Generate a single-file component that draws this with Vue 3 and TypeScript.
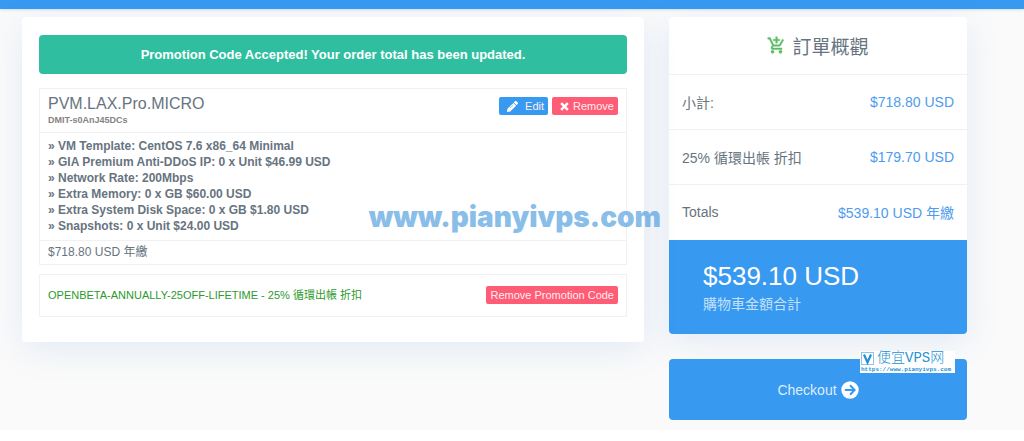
<script setup lang="ts">
interface SummaryRow {
  label: string
  amount: string
}

const options: string[] = [
  'VM Template: CentOS 7.6 x86_64 Minimal',
  'GIA Premium Anti-DDoS IP: 0 x Unit $46.99 USD',
  'Network Rate: 200Mbps',
  'Extra Memory: 0 x GB $60.00 USD',
  'Extra System Disk Space: 0 x GB $1.80 USD',
  'Snapshots: 0 x Unit $24.00 USD',
]

const summary: SummaryRow[] = [
  { label: '小計:', amount: '$718.80 USD' },
  { label: '25% 循環出帳 折扣', amount: '$179.70 USD' },
  { label: 'Totals', amount: '$539.10 USD 年繳' },
]
</script>

<template>
  <div class="page">
    <header class="topbar"></header>
    <main class="layout">
      <section class="card cart">
        <p class="alert" role="status">Promotion Code Accepted! Your order total has been updated.</p>

        <article class="item">
          <header class="item-head">
            <div>
              <h2 class="item-name">PVM.LAX.Pro.MICRO</h2>
              <p class="item-host">DMIT-s0AnJ45DCs</p>
            </div>
            <div class="actions">
              <button type="button" class="btn btn-blue">
                <svg class="icon-edit" viewBox="0 0 512 512" aria-hidden="true">
                  <path fill="currentColor" d="M498 142l-46 46c-5 5-12 5-17 0L324 77c-5-5-5-12 0-17l46-46c19-19 49-19 68 0l60 60c19 19 19 49 0 68zM284 100L22 362 0 484c-3 16 12 30 28 28l122-22 262-262c5-5 5-12 0-17L301 100c-5-5-12-5-17 0z" />
                  <path d="M135 330L290 175" fill="none" stroke="#3899f1" stroke-width="22" />
                </svg>
                Edit
              </button>
              <button type="button" class="btn btn-red">
                <svg class="icon-remove" viewBox="0 0 10 10" aria-hidden="true">
                  <path d="M1.300 1.300l7.400 7.400M8.700 1.300L1.300 8.700" fill="none" stroke="currentColor" stroke-width="2.800" />
                </svg>
                Remove
              </button>
            </div>
          </header>
          <ul class="options">
            <li v-for="option in options" :key="option">» {{ option }}</li>
          </ul>
          <p class="item-price">$718.80 USD 年繳</p>
        </article>

        <div class="promo">
          <p class="promo-name">OPENBETA-ANNUALLY-25OFF-LIFETIME - 25% 循環出帳 折扣</p>
          <button type="button" class="btn btn-red">Remove Promotion Code</button>
        </div>
        <span class="watermark">www.pianyivps.com</span>
      </section>

      <aside class="side">
        <section class="card overview">
          <h2 class="overview-title">
            <svg class="icon-cart" viewBox="0 0 24 24" aria-hidden="true">
              <path fill="currentColor" stroke="currentColor" stroke-width="0.500" d="M11 9h2V6h3V4h-3V1h-2v3H8v2h3v3zm-4 9c-1.100 0-1.990.9-1.990 2S5.900 22 7 22s2-.9 2-2-.9-2-2-2zm10 0c-1.100 0-1.990.9-1.990 2s.89 2 1.990 2 2-.9 2-2-.9-2-2-2zm-9.830-3.250l.03-.12.9-1.630h7.450c.75 0 1.410-.41 1.750-1.030l3.860-7.010L19.420 4h-.01l-1.100 2-2.760 5H8.530l-.13-.27L6.160 6l-.95-2-.94-2H1v2h2l3.600 7.590-1.350 2.450c-.16.28-.25.61-.25.96 0 1.100.9 2 2 2h12v-2H7.420c-.13 0-.25-.11-.25-.25z" />
            </svg>
            訂單概觀
          </h2>
          <dl class="rows">
            <div v-for="row in summary" :key="row.label" class="row">
              <dt>{{ row.label }}</dt>
              <dd>{{ row.amount }}</dd>
            </div>
          </dl>
          <div class="total">
            <strong class="total-amount">$539.10 USD</strong>
            <span class="total-label">購物車金額合計</span>
          </div>
        </section>

        <div class="checkout-wrap">
          <button type="button" class="checkout">
            Checkout
            <svg class="icon-arrow" viewBox="0 0 18 18" aria-hidden="true">
              <circle cx="9" cy="9" r="8.700" fill="#fff" />
              <path d="M3.800 9h9.600M9 4.300L13.600 9 9 13.700" fill="none" stroke="#3899f1" stroke-width="2" />
            </svg>
          </button>
          <div class="stamp">
            <div class="stamp-name">
              <svg class="icon-stamp" viewBox="0 0 13 13" aria-hidden="true">
                <rect x="0.500" y="0.500" width="12" height="12" fill="#fff" stroke="#8cc6ea" />
                <path d="M3 2.500L6.500 10.500 10 2.500" fill="none" stroke="#2492d4" stroke-width="2.200" />
              </svg>
              <span>便宜VPS网</span>
            </div>
            <span class="stamp-url">https://www.pianyivps.com</span>
          </div>
        </div>
      </aside>
    </main>
  </div>
</template>

<style>
body {
  margin: 0;
  background: #fff;
}
</style>

<style scoped>
.page {
  background: #fafafa;
  color: #677480;
  font-family: "Liberation Sans", Arial, "Noto Sans CJK TC", sans-serif;
  font-size: 14px;
}

h2,
p,
ul,
dl,
dd {
  margin: 0;
  padding: 0;
  font-weight: 400;
}

button {
  border: 0;
  font-family: inherit;
  color: #fff;
  cursor: pointer;
}

.topbar {
  height: 9px;
  background: #3899f1;
  box-shadow: 0 1px 3px rgba(56, 120, 200, 0.2);
}

.layout {
  display: grid;
  grid-template-columns: 622fr 298fr;
  align-items: start;
  gap: 25px;
  padding: 8px 57px 10px 22px;
}

.card {
  background: #fff;
  border-radius: 4px;
  box-shadow: 0 8px 34px rgba(60, 120, 210, 0.12);
}

.cart {
  position: relative;
  padding: 18px 17px 25px;
}

.alert {
  padding: 10px;
  border-radius: 4px;
  background: #2fbfa0;
  color: #fff;
  font-size: 13px;
  font-weight: 700;
  line-height: 19px;
  text-align: center;
}

.item {
  margin-top: 14px;
  border: 1px solid #eff1f4;
}

.item-head {
  display: flex;
  justify-content: space-between;
  align-items: flex-start;
  padding: 5px 8px;
}

.item-name {
  font-size: 16px;
  line-height: 20px;
}

.item-host {
  color: #85837f;
  font-size: 9px;
  font-weight: 700;
  line-height: 13px;
}

.actions {
  display: flex;
  gap: 4px;
  padding-top: 3px;
}

.btn {
  display: flex;
  align-items: center;
  justify-content: center;
  height: 18px;
  padding: 0 4px;
  border-radius: 2px;
  color: #ffeef1;
  font-size: 11px;
  line-height: 18px;
}

.btn-blue {
  background: #3899f1;
}

.btn-red {
  background: #ff5c75;
}

.btn svg {
  color: #fff;
}

.icon-edit {
  width: 11px;
  height: 11px;
  margin: 0 7px 0 4px;
}

.icon-remove {
  width: 9px;
  height: 9px;
  margin: 0 4px;
}

.options {
  padding: 5px 8px 6px;
  border: solid #eff1f4;
  border-width: 1px 0;
  list-style: none;
  font-size: 12px;
  font-weight: 700;
  line-height: 16px;
}

.item-price {
  padding: 0 8px;
  font-size: 12px;
  line-height: 23px;
}

.promo {
  display: flex;
  align-items: center;
  justify-content: space-between;
  margin-top: 9px;
  padding: 11px 8px 12px;
  border: 1px solid #eff1f4;
}

.promo-name {
  color: #2c9a2c;
  font-size: 11px;
  line-height: 18px;
}

.watermark {
  position: absolute;
  right: -17px;
  bottom: 105px;
  color: #3b93dc;
  font-family: Inter, "Liberation Sans", sans-serif;
  font-size: 28px;
  font-weight: 900;
  line-height: 40px;
  white-space: nowrap;
  opacity: 0.6;
  pointer-events: none;
}

.side {
  display: grid;
  gap: 25px;
}

.overview {
  overflow: hidden;
}

.overview-title {
  display: flex;
  align-items: center;
  justify-content: center;
  gap: 6px;
  height: 57px;
  font-size: 19px;
}

.icon-cart {
  width: 19px;
  height: 19px;
  color: #5cbc63;
}

.rows {
  padding-bottom: 1px;
}

.row {
  display: flex;
  align-items: center;
  justify-content: space-between;
  height: 54px;
  padding: 0 13px;
  border-top: 1px solid #eff1f4;
}

.row dd {
  color: #4e9bf0;
}

.total {
  display: grid;
  padding: 20px 34px 18px;
  background: #3899f1;
  color: #fff;
}

.total-amount {
  font-size: 26px;
  font-weight: 400;
  line-height: 32px;
}

.total-label {
  color: #c4e0fb;
  line-height: 24px;
}

.checkout-wrap {
  position: relative;
}

.checkout {
  display: flex;
  align-items: center;
  justify-content: center;
  gap: 4px;
  width: 100%;
  height: 61px;
  border-radius: 4px;
  background: #3899f1;
  color: #deedfd;
  font-size: 14px;
}

.icon-arrow {
  width: 18px;
  height: 18px;
}

.stamp {
  position: absolute;
  top: -8px;
  right: 12px;
  width: 95px;
  height: 22px;
  background: #fff;
  color: #2492d4;
}

.stamp-name {
  display: flex;
  align-items: center;
  gap: 3px;
  height: 15px;
  padding-left: 1px;
  font-family: "Liberation Mono", "Noto Sans CJK SC", monospace;
  font-size: 14px;
  font-weight: 300;
  line-height: 15px;
  white-space: nowrap;
}

.icon-stamp {
  width: 13px;
  height: 13px;
}

.stamp-url {
  display: block;
  padding-left: 1px;
  font-family: "Liberation Mono", monospace;
  font-size: 6px;
  font-weight: 700;
  line-height: 7px;
}
</style>
